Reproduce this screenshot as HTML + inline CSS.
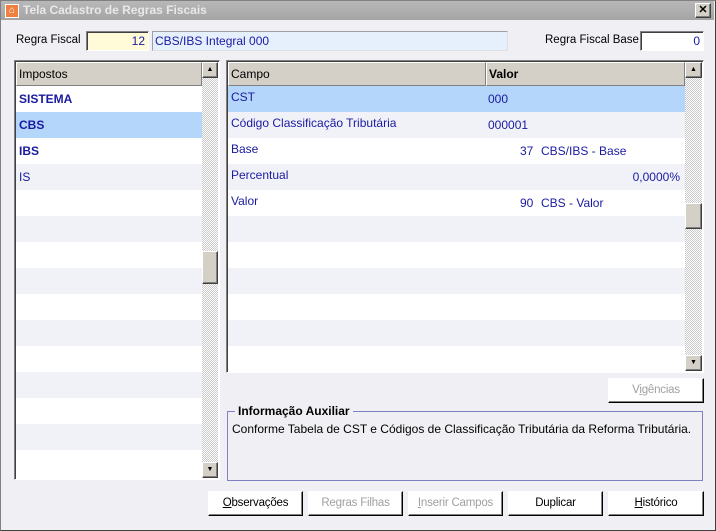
<!DOCTYPE html>
<html><head><meta charset="utf-8"><style>
*{box-sizing:border-box;margin:0;padding:0}
body{width:716px;height:531px;overflow:hidden;background:#f0f0f4;font-family:"Liberation Sans",sans-serif;font-size:12px;position:relative;color:#000}
.abs{position:absolute}
.win{left:0;top:0;width:716px;height:531px;border:1px solid #808080;border-right-color:#404040;border-bottom-color:#404040}
.title{left:1px;top:1px;width:713px;height:19px;background:linear-gradient(#b8b8b8,#a4a4a4);color:#e8e8e8;font-weight:bold;font-size:12px;line-height:19px;padding-left:22px}
.sunk{border:1px solid;border-color:#808080 #fff #fff #808080;box-shadow:inset 1px 1px 0 #404040}
.track{background-color:#eee;background-image:repeating-conic-gradient(#c8c8c8 0 25%,#fff 0 50%);background-size:2px 2px}
.btn3d{background:#d4d0c8;border:1px solid;border-color:#fff #404040 #404040 #fff;box-shadow:inset -1px -1px 0 #808080}
.row{position:absolute;height:26px;line-height:22px;color:#1a1aa0;font-size:12px;padding-left:3px}
.w{background:#fff}.g{background:#f1f2f8}.s{background:#b4d6fa}
.hdr{background:#d4d0c8;border:1px solid;border-color:#fff #808080 #808080 #fff;height:24px;line-height:22px;padding-left:2px;font-size:12px}
.btn{position:absolute;height:25px;top:491px;background:#fff;border:1px solid;border-color:#fff #000 #000 #fff;box-shadow:inset -1px -1px 0 #808080;text-align:center;line-height:23px;font-size:11.5px;letter-spacing:-0.2px}
.dis{color:#a0a0a0}
</style></head><body>
<div class="abs win"></div>
<div class="abs title">Tela Cadastro de Regras Fiscais</div>
<div class="abs" style="left:5px;top:4px;width:14px;height:14px;background:#f08040;border:1px solid #fff;color:#fff;font-size:10px;line-height:12px;text-align:center">⌂</div>
<div class="abs btn3d" style="left:695px;top:3px;width:16px;height:15px;font-size:11px;line-height:12px;text-align:center;font-weight:bold">✕</div>

<div class="abs" style="left:16px;top:34px;font-size:11.5px">Regra Fiscal</div>
<div class="abs sunk" style="left:86px;top:31px;width:63px;height:20px;background:#fffbd8;text-align:right;padding-right:3px;line-height:18px;color:#1a1aa0">12</div>
<div class="abs sunk" style="left:152px;top:31px;width:356px;height:20px;background:#e6f0fc;padding-left:2px;line-height:18px;color:#1a1aa0;box-shadow:none;border-color:#a0a0a0 #e0e0e0 #e0e0e0 #a0a0a0">CBS/IBS Integral 000</div>
<div class="abs" style="left:545px;top:34px;font-size:11.5px">Regra Fiscal Base</div>
<div class="abs sunk" style="left:640px;top:31px;width:64px;height:20px;background:#fff;text-align:right;padding-right:3px;line-height:18px;color:#1a1aa0">0</div>

<div class="abs sunk" style="left:14px;top:60px;width:206px;height:420px;background:#fff"></div>
<div class="abs hdr" style="left:16px;top:62px;width:186px">Impostos</div>
<div class="row w" style="left:16px;top:86px;width:186px;font-weight:bold;line-height:26px">SISTEMA</div>
<div class="row s" style="left:16px;top:112px;width:186px;font-weight:bold;line-height:26px">CBS</div>
<div class="row w" style="left:16px;top:138px;width:186px;font-weight:bold;line-height:26px">IBS</div>
<div class="row g" style="left:16px;top:164px;width:186px;line-height:26px">IS</div>
<div class="row w" style="left:16px;top:190px;width:186px"></div>
<div class="row g" style="left:16px;top:216px;width:186px"></div>
<div class="row w" style="left:16px;top:242px;width:186px"></div>
<div class="row g" style="left:16px;top:268px;width:186px"></div>
<div class="row w" style="left:16px;top:294px;width:186px"></div>
<div class="row g" style="left:16px;top:320px;width:186px"></div>
<div class="row w" style="left:16px;top:346px;width:186px"></div>
<div class="row g" style="left:16px;top:372px;width:186px"></div>
<div class="row w" style="left:16px;top:398px;width:186px"></div>
<div class="row g" style="left:16px;top:424px;width:186px"></div>
<div class="row w" style="left:16px;top:450px;width:186px;height:28px"></div>
<div class="abs track" style="left:202px;top:62px;width:16px;height:416px"></div>
<div class="abs btn3d" style="left:202px;top:62px;width:16px;height:16px;font-size:7px;text-align:center;line-height:13px">▲</div>
<div class="abs btn3d" style="left:202px;top:251px;width:16px;height:33px"></div>
<div class="abs btn3d" style="left:202px;top:462px;width:16px;height:16px;font-size:7px;text-align:center;line-height:13px">▼</div>

<div class="abs sunk" style="left:226px;top:60px;width:478px;height:313px;background:#fff"></div>
<div class="abs hdr" style="left:228px;top:62px;width:258px">Campo</div>
<div class="abs hdr" style="left:486px;top:62px;width:199px;font-weight:bold">Valor</div>
<div class="row s" style="left:228px;top:86px;width:457px">CST<span class="abs" style="left:260px;top:2px">000</span></div>
<div class="row g" style="left:228px;top:112px;width:457px">Código Classificação Tributária<span class="abs" style="left:260px;top:2px">000001</span></div>
<div class="row w" style="left:228px;top:138px;width:457px">Base<span class="abs" style="left:292px;top:2px">37</span><span class="abs" style="left:313px;top:2px">CBS/IBS - Base</span></div>
<div class="row g" style="left:228px;top:164px;width:457px">Percentual<span class="abs" style="right:5px;top:2px">0,0000%</span></div>
<div class="row w" style="left:228px;top:190px;width:457px">Valor<span class="abs" style="left:292px;top:2px">90</span><span class="abs" style="left:313px;top:2px">CBS - Valor</span></div>
<div class="row g" style="left:228px;top:216px;width:457px"></div>
<div class="row w" style="left:228px;top:242px;width:457px"></div>
<div class="row g" style="left:228px;top:268px;width:457px"></div>
<div class="row w" style="left:228px;top:294px;width:457px"></div>
<div class="row g" style="left:228px;top:320px;width:457px"></div>
<div class="row w" style="left:228px;top:346px;width:457px;height:25px"></div>
<div class="abs track" style="left:685px;top:62px;width:17px;height:309px"></div>
<div class="abs btn3d" style="left:685px;top:62px;width:17px;height:16px;font-size:7px;text-align:center;line-height:13px">▲</div>
<div class="abs btn3d" style="left:685px;top:203px;width:17px;height:26px"></div>
<div class="abs btn3d" style="left:685px;top:355px;width:17px;height:16px;font-size:7px;text-align:center;line-height:13px">▼</div>

<div class="btn dis" style="left:608px;top:378px;width:96px">V<u>i</u>gências</div>

<div class="abs" style="left:227px;top:411px;width:476px;height:70px;border:1px solid #8080c0"></div>
<div class="abs" style="left:235px;top:404px;background:#f0f0f4;padding:0 3px;font-weight:bold;font-size:12px">Informação Auxiliar</div>
<div class="abs" style="left:232px;top:422px">Conforme Tabela de CST e Códigos de Classificação Tributária da Reforma Tributária.</div>

<div class="btn" style="left:208px;width:95px"><u>O</u>bservações</div>
<div class="btn dis" style="left:308px;width:95px">Regras Filhas</div>
<div class="btn dis" style="left:408px;width:95px"><u>I</u>nserir Campos</div>
<div class="btn" style="left:508px;width:95px">Duplicar</div>
<div class="btn" style="left:608px;width:96px"><u>H</u>istórico</div>
</body></html>
